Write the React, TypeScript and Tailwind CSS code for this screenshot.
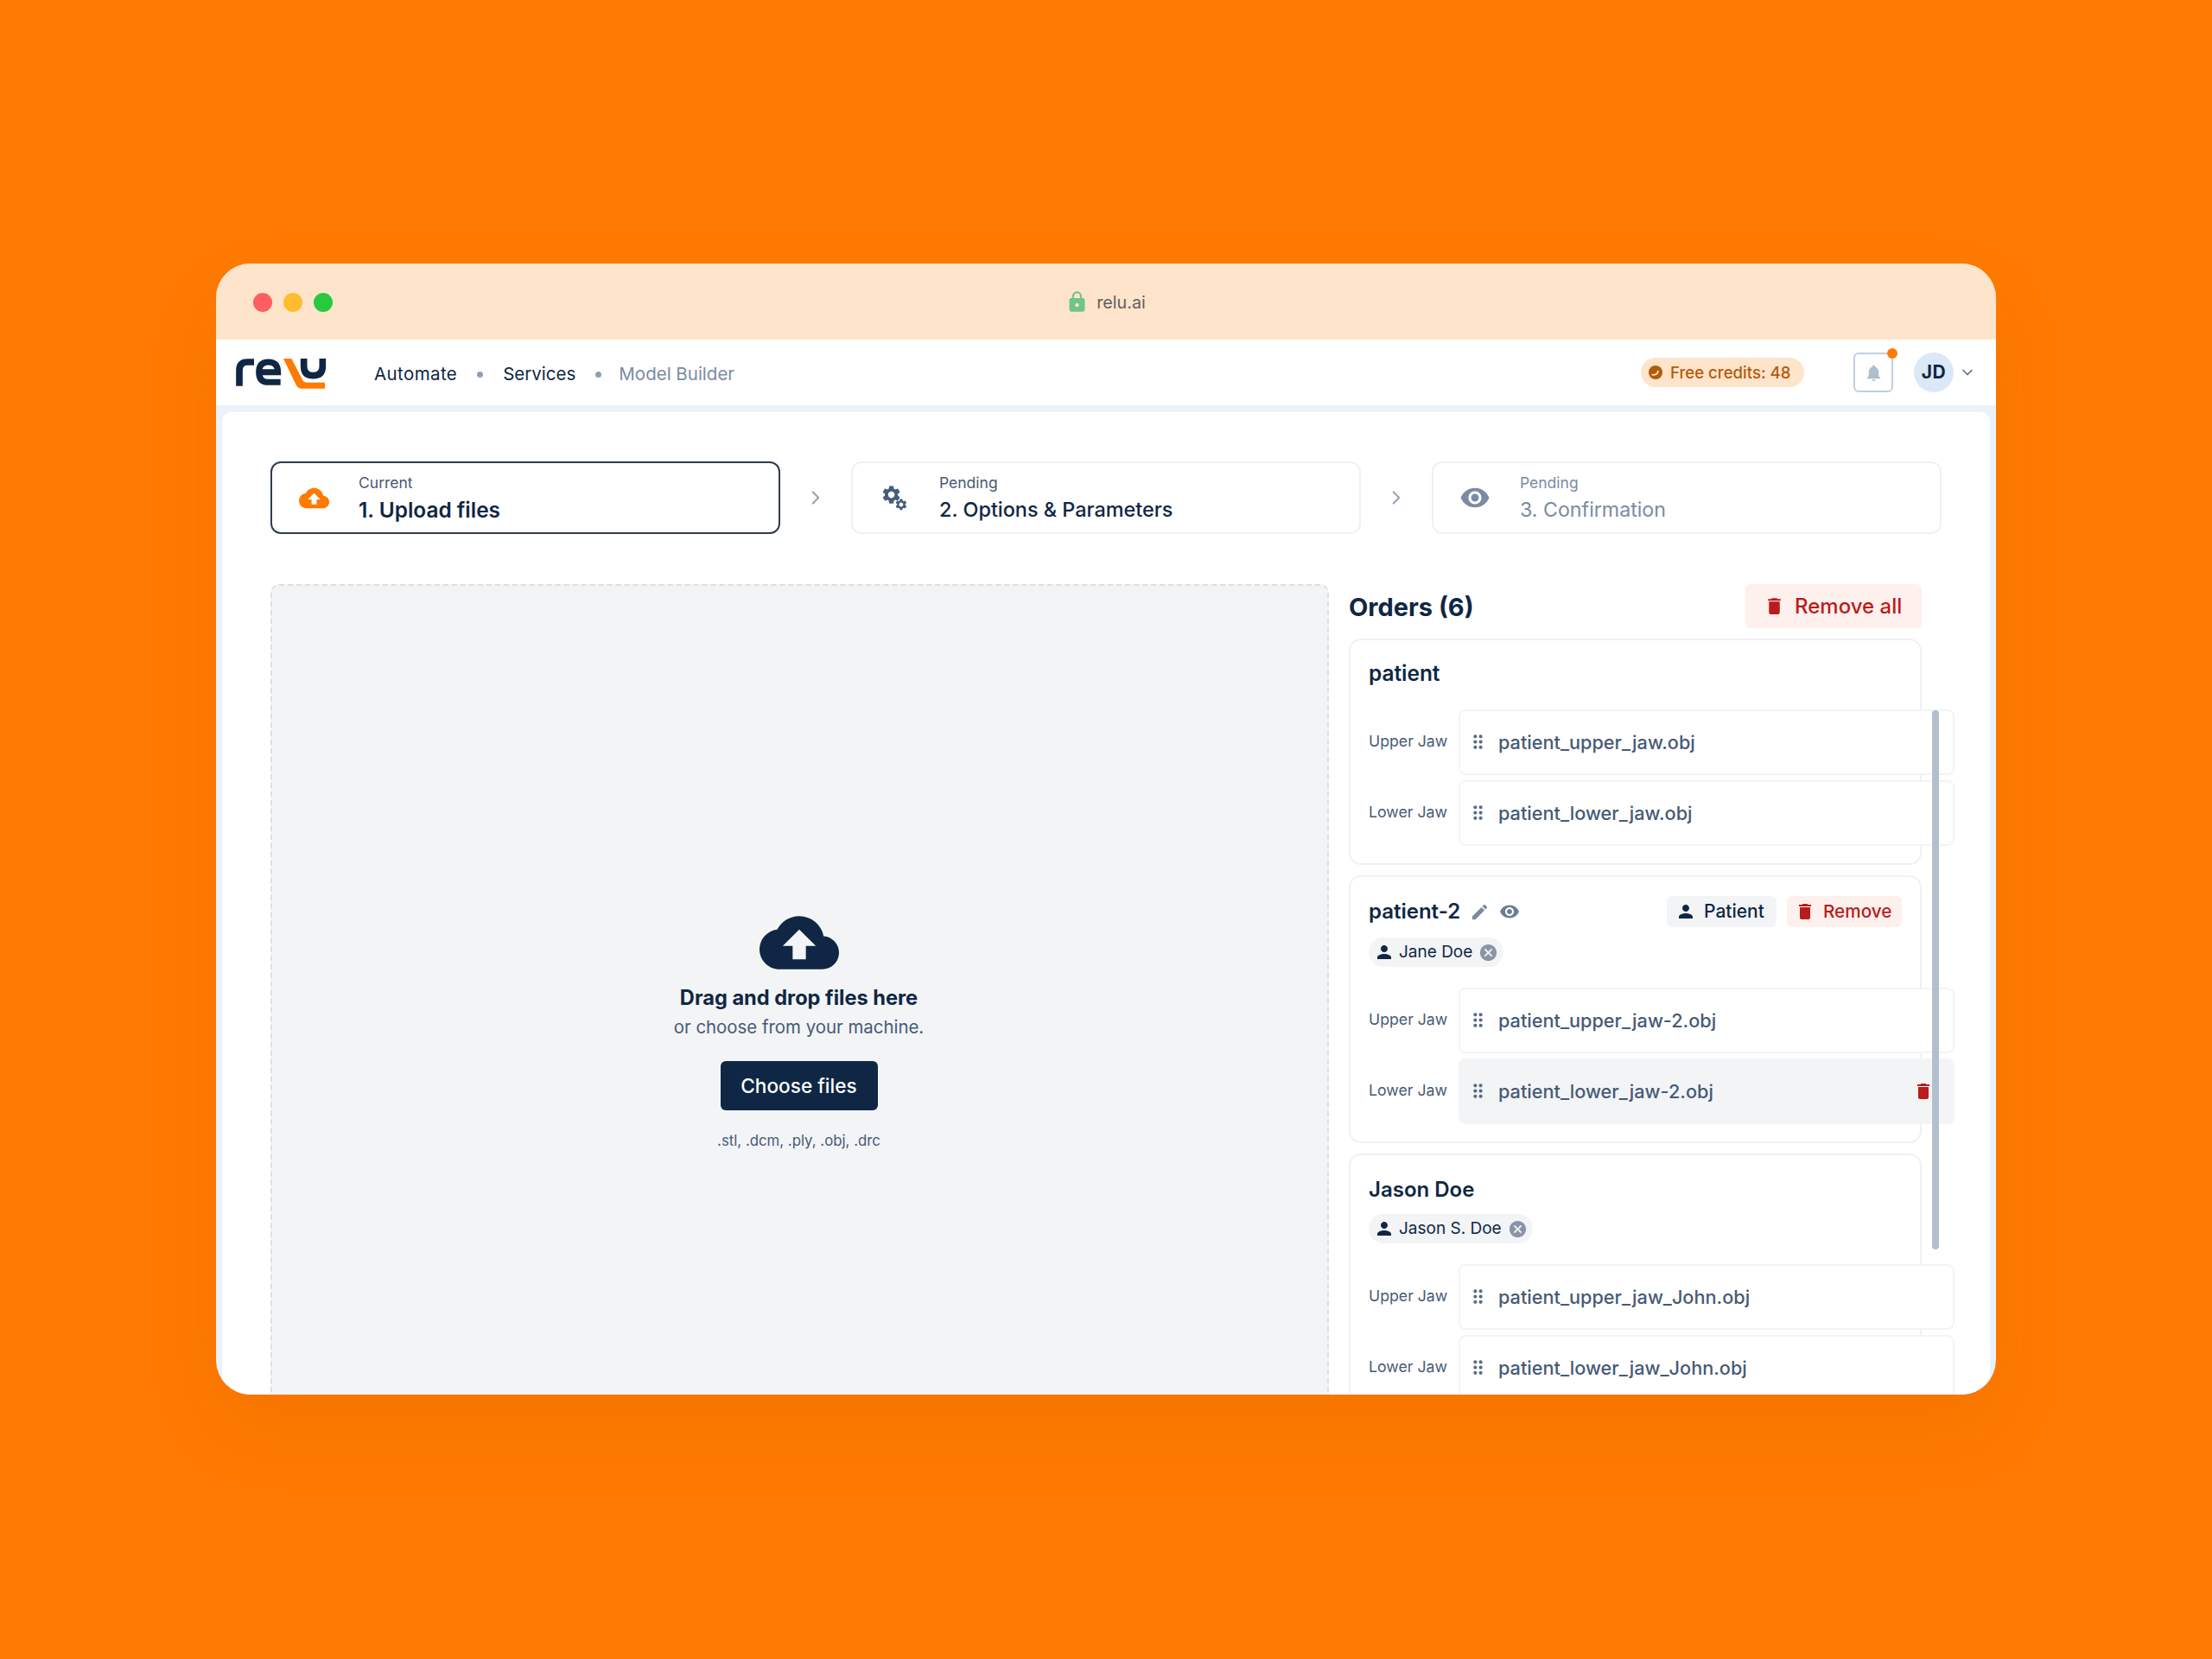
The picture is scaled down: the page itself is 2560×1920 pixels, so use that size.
import { ChevronDown, ChevronRight } from "lucide-react";
import {
  MdCancel,
  MdCloudUpload,
  MdDelete,
  MdDragIndicator,
  MdEdit,
  MdLock,
  MdNotifications,
  MdPerson,
  MdVisibility,
} from "react-icons/md";

const gear =
  "M19.14 12.94c.04-.3.06-.61.06-.94 0-.32-.02-.64-.07-.94l2.03-1.58c.18-.14.23-.41.12-.61l-1.92-3.32c-.12-.22-.37-.29-.59-.22l-2.39.96c-.5-.38-1.03-.7-1.62-.94l-.36-2.54c-.04-.24-.24-.41-.48-.41h-3.84c-.24 0-.43.17-.47.41l-.36 2.54c-.59.24-1.13.57-1.62.94l-2.39-.96c-.22-.08-.47 0-.59.22L2.74 8.87c-.12.21-.08.47.12.61l2.03 1.58c-.05.3-.09.63-.09.94s.02.64.07.94l-2.03 1.58c-.18.14-.23.41-.12.61l1.92 3.32c.12.22.37.29.59.22l2.39-.96c.5.38 1.03.7 1.62.94l.36 2.54c.05.24.24.41.48.41h3.84c.24 0 .44-.17.47-.41l.36-2.54c.59-.24 1.13-.56 1.62-.94l2.39.96c.22.08.47 0 .59-.22l1.92-3.32c.12-.22.07-.47-.12-.61l-2.01-1.58zM12 15.6c-1.98 0-3.6-1.62-3.6-3.6s1.62-3.6 3.6-3.6 3.6 1.62 3.6 3.6-1.62 3.6-3.6 3.6z";

function Logo() {
  return (
    <svg width="124" height="54" viewBox="0 0 372 162" className="shrink-0">
      <path d="M45 128V74Q45 45 73 45H96" fill="none" stroke="#0f2744" strokeWidth="23" />
      <path
        d="M113 80H179Q179 45 146 45Q113 45 113 80Q113 115 146 115H188"
        fill="none"
        stroke="#0f2744"
        strokeWidth="21"
      />
      <path d="M198 33H226L264 106Q268 116 278 116H342V137H262Q248 137 241 122Z" fill="#ff7a00" />
      <path d="M269 33V60Q269 92 301 92Q334 92 334 60V33" fill="none" stroke="#0f2744" strokeWidth="23" />
    </svg>
  );
}

function Gears() {
  return (
    <svg width="34" height="34" viewBox="0 0 34 34" className="shrink-0" fill="#475d7c">
      <path d={gear} transform="translate(1 1) scale(1.05)" />
      <path d={gear} transform="translate(17 17) scale(0.66)" />
    </svg>
  );
}

function Step({
  icon,
  label,
  title,
  active,
  muted,
}: {
  icon: React.ReactNode;
  label: string;
  title: string;
  active?: boolean;
  muted?: boolean;
}) {
  return (
    <div
      className={`flex h-[84px] w-[590px] shrink-0 items-center rounded-[12px] pl-[30px] ${
        active ? "border-2 border-[#2f3c50]" : "border-2 border-[#eff1f4]"
      }`}
    >
      <div className="flex w-[36px] justify-center">{icon}</div>
      <div className="ml-[34px]">
        <div className={`text-[17.5px] leading-[24px] ${muted ? "text-[#7b8ba3]" : "text-[#475a76]"}`}>{label}</div>
        <div
          className={`mt-[4px] pb-[1px] leading-[30px] ${
            active
              ? "text-[24.4px] font-semibold text-[#0f2744]"
              : muted
                ? "text-[23.2px] text-[#7b8ba3]"
                : "text-[23.4px] font-medium text-[#0f2744]"
          }`}
        >
          {title}
        </div>
      </div>
    </div>
  );
}

function Arrow() {
  return (
    <div className="flex w-[82px] shrink-0 items-center justify-center">
      <ChevronRight size={26} className="text-[#9aa5b4]" />
    </div>
  );
}

function FileRow({ label, name, hover }: { label: string; name: string; hover?: boolean }) {
  return (
    <div className="flex items-center">
      <div className="w-[104px] shrink-0 pb-[2px] text-[17.7px] font-normal text-[#475a76]">{label}</div>
      <div
        className={`relative flex h-[76px] w-[574px] shrink-0 items-center justify-between rounded-[8px] border-2 pl-[8px] pr-[22px] ${
          hover ? "border-[#f2f4f6] bg-[#f2f4f6]" : "border-[#f3f4f6] bg-white"
        }`}
      >
        <div className="flex items-center">
          <MdDragIndicator size={25} className="text-[#5a6c86]" />
          <span className="ml-[11px] text-[21.7px] font-medium text-[#475a76]">{name}</span>
        </div>
        {hover && <MdDelete size={24} className="text-[#b91c1c]" />}
      </div>
    </div>
  );
}

function Chip({ name }: { name: string }) {
  return (
    <div className="inline-flex h-[34px] items-center rounded-full bg-[#f2f4f6] pl-[6px] pr-[6px]">
      <MdPerson size={24} className="text-[#0f2744]" />
      <span className="ml-[5px] mr-[7px] text-[19px] text-[#0f2744]">{name}</span>
      <MdCancel size={23} className="text-[#8a94a6]" />
    </div>
  );
}

export default function App() {
  return (
    <div
      className="flex min-h-[1920px] justify-center bg-[#ff7a00] pt-[305px] text-[#0f2744]"
      style={{ fontFamily: "Inter, 'Noto Sans', sans-serif" }}
    >
      <div className="flex h-[1309px] w-[2060px] flex-col overflow-hidden rounded-[40px] bg-[#ebf2fa] shadow-[0_40px_90px_rgba(120,60,0,0.07)]">
        {/* browser bar */}
        <div className="relative flex h-[88px] shrink-0 items-center justify-center bg-[#fee4ca]">
          <div className="absolute left-[43px] top-[34px] flex gap-[13px]">
            <div className="h-[22px] w-[22px] rounded-full bg-[#fd5f60]" />
            <div className="h-[22px] w-[22px] rounded-full bg-[#febc2e]" />
            <div className="h-[22px] w-[22px] rounded-full bg-[#27c93f]" />
          </div>
          <MdLock size={27} className="-ml-[1px] text-[#6fc587]" />
          <span className="ml-[9px] pt-[3px] text-[19.7px] text-[#5f5f5f]">relu.ai</span>
        </div>

        {/* nav */}
        <div className="flex h-[76px] shrink-0 items-center bg-white pl-[12px] pr-[23px]">
          <Logo />
          <div className="ml-[47px] flex items-center gap-[23px] pt-[5px] text-[20.5px]">
            <span className="tracking-[0.4px]">Automate</span>
            <span className="h-[7px] w-[7px] rounded-full bg-[#8ea0b8]" />
            <span>Services</span>
            <span className="h-[7px] w-[7px] rounded-full bg-[#8ea0b8]" />
            <span className="-ml-[3px] text-[#7b8ba3]">Model Builder</span>
          </div>
          <div className="ml-auto flex h-[34px] w-[189px] items-center rounded-full bg-[#fee4ca] pl-[9px] text-[18.6px] font-medium text-[#b45a0c]">
            <svg width="16" height="16" viewBox="0 0 16 16" className="shrink-0">
              <circle cx="8" cy="8" r="8" fill="#b45a0c" />
              <path d="M3.5 10.5Q7 11.5 8.5 10Q10.5 9.5 11 6" fill="none" stroke="#fee4ca" strokeWidth="1.8" />
            </svg>
            <span className="ml-[9px] pt-[1px]">Free credits: 48</span>
          </div>
          <div className="relative ml-[57px] flex h-[46px] w-[46px] items-center justify-center rounded-[6px] border-2 border-[#c3cfdf]">
            <MdNotifications size={23} className="text-[#b0bdcf]" />
            <div className="absolute -right-[7px] -top-[7px] h-[12px] w-[12px] rounded-full bg-[#ff7a00]" />
          </div>
          <div className="ml-[24px] flex h-[46px] w-[46px] items-center justify-center rounded-full bg-[#dbe8f7] text-[21px] font-bold tracking-[0.5px]">
            JD
          </div>
          <ChevronDown size={20} className="ml-[6px] text-[#5a6c86]" />
        </div>

        {/* page */}
        <div className="mx-[7px] mt-[8px] flex-1 rounded-t-[10px] bg-white px-[56px] pt-[57px]">
          <div className="flex">
            <Step active icon={<MdCloudUpload size={35} className="text-[#ff7a00]" />} label="Current" title="1. Upload files" />
            <Arrow />
            <Step icon={<Gears />} label="Pending" title="2. Options & Parameters" />
            <Arrow />
            <Step muted icon={<MdVisibility size={36} className="text-[#7b8ba3]" />} label="Pending" title="3. Confirmation" />
          </div>

          <div className="mt-[58px] flex gap-[23px]">
            {/* drop zone */}
            <div className="flex h-[1100px] w-[1225px] shrink-0 flex-col items-center rounded-[10px] border-2 border-dashed border-[#dcdfe3] bg-[#f2f4f6] pr-[2px] pt-[367px]">
              <MdCloudUpload size={92} className="text-[#0f2744]" />
              <div className="mt-[3px] text-[23.6px] font-bold leading-[30px]">Drag and drop files here</div>
              <div className="mt-[4px] text-[20.4px] leading-[30px] text-[#475a76]">or choose from your machine.</div>
              <button className="mt-[24px] h-[57px] w-[182px] rounded-[6px] bg-[#0f2744] text-[22.6px] font-medium text-white">
                Choose files
              </button>
              <div className="mt-[23px] text-[16.8px] leading-[24px] text-[#475a76]">.stl, .dcm, .ply, .obj, .drc</div>
            </div>

            {/* orders */}
            <div className="relative w-[663px] shrink-0">
              <div className="flex h-[51px] items-center justify-between">
                <div className="pt-[2px] text-[29px] font-bold">Orders (6)</div>
                <button className="flex h-[51px] w-[204px] items-center rounded-[6px] bg-[#fef0ec] pl-[21px] text-[24px] font-medium text-[#b91c1c]">
                  <MdDelete size={25} />
                  <span className="ml-[11px]">Remove all</span>
                </button>
              </div>

              <div className="mt-[12px] h-[262px] rounded-[14px] border-2 border-[#eff1f4] px-[21px]">
                <div className="mb-[4px] flex h-[76px] items-center text-[24.4px] font-semibold">patient</div>
                <div className="flex flex-col gap-[6px]">
                  <FileRow label="Upper Jaw" name="patient_upper_jaw.obj" />
                  <FileRow label="Lower Jaw" name="patient_lower_jaw.obj" />
                </div>
              </div>

              <div className="mt-[12px] h-[310px] rounded-[14px] border-2 border-[#eff1f4] px-[21px] pt-[22px]">
                <div className="flex h-[36px] items-center">
                  <span className="text-[24px] font-semibold">patient-2</span>
                  <MdEdit size={23} className="ml-[11px] text-[#7b8ba3]" />
                  <MdVisibility size={24} className="ml-[11px] text-[#6b7d96]" />
                  <button className="ml-auto flex h-[36px] w-[127px] items-center rounded-[6px] bg-[#f2f4f6] pl-[10px] text-[21px] font-medium">
                    <MdPerson size={24} />
                    <span className="ml-[9px]">Patient</span>
                  </button>
                  <button className="ml-[12px] flex h-[36px] w-[133px] items-center rounded-[6px] bg-[#fef0ec] pl-[9px] text-[20.7px] font-medium text-[#b91c1c]">
                    <MdDelete size={24} />
                    <span className="ml-[9px]">Remove</span>
                  </button>
                </div>
                <div className="mt-[12px] flex h-[34px]">
                  <Chip name="Jane Doe" />
                </div>
                <div className="mt-[24px] flex flex-col gap-[6px]">
                  <FileRow label="Upper Jaw" name="patient_upper_jaw-2.obj" />
                  <FileRow hover label="Lower Jaw" name="patient_lower_jaw-2.obj" />
                </div>
              </div>

              <div className="mt-[12px] rounded-[14px] border-2 border-[#eff1f4] px-[21px] pt-[23px]">
                <div className="flex h-[34px] items-center text-[24px] font-semibold">Jason Doe</div>
                <div className="mt-[11px] flex h-[34px]">
                  <Chip name="Jason S. Doe" />
                </div>
                <div className="mt-[24px] flex flex-col gap-[6px]">
                  <FileRow label="Upper Jaw" name="patient_upper_jaw_John.obj" />
                  <FileRow label="Lower Jaw" name="patient_lower_jaw_John.obj" />
                </div>
              </div>

              {/* scrollbar */}
              <div className="absolute left-[675px] top-[146px] h-[624px] w-[8px] rounded-full bg-[#b3bfcd]" />
            </div>
          </div>
        </div>
      </div>
    </div>
  );
}
